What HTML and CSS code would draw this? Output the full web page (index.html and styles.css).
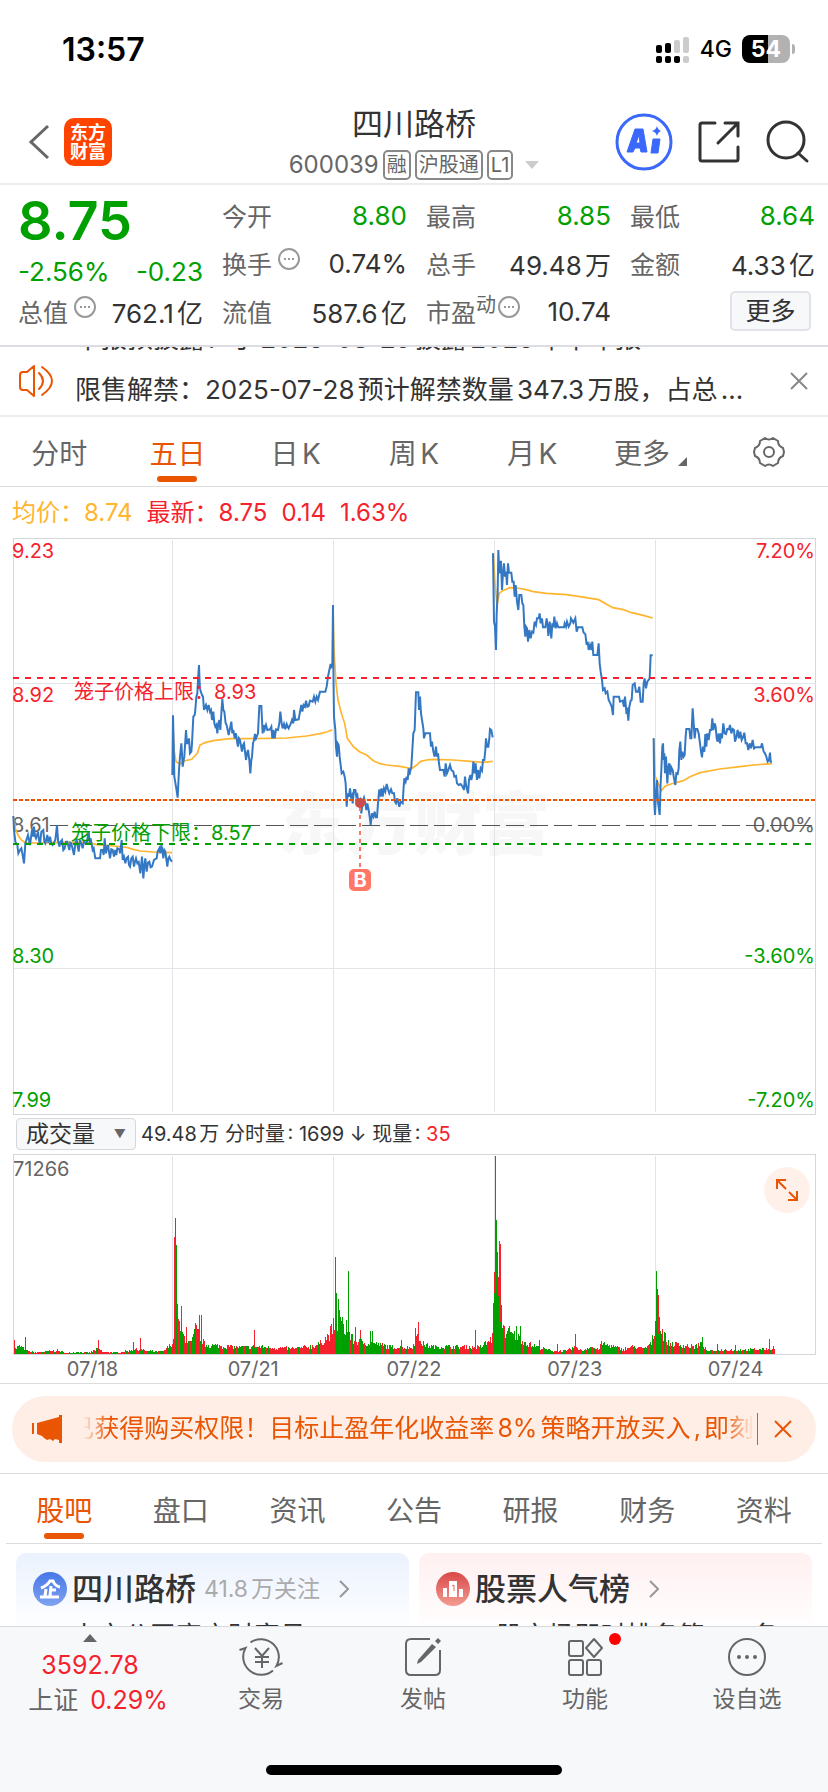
FILE: index.html
```
<!DOCTYPE html>
<html lang="zh-CN">
<head>
    <meta charset="UTF-8">
    <meta name="viewport" content="width=device-width, initial-scale=1.0">
    <title>四川路桥 600039</title>
    <link rel="stylesheet" href="styles.css">
</head>
<body>
    <div class="status-bar">
        <span class="clock">13:57</span>
        <div class="status-icons">
            <svg width="34" height="28" viewBox="0 0 34 28">
                <g fill="#000">
                    <rect x="0" y="10" width="6" height="8" rx="2"/>
                    <rect x="9" y="8" width="6" height="10" rx="2"/>
                    <rect x="0" y="21" width="6" height="7" rx="2"/>
                    <rect x="9" y="21" width="6" height="7" rx="2"/>
                    <rect x="18" y="21" width="6" height="7" rx="2"/>
                </g>
                <g fill="#ccc">
                    <rect x="18" y="5" width="6" height="13" rx="2"/>
                    <rect x="27" y="2" width="6" height="16" rx="2"/>
                    <rect x="27" y="21" width="6" height="7" rx="2"/>
                </g>
            </svg>
            <span class="network">4G</span>
            <div class="battery">54</div>
        </div>
    </div>

    <header class="header">
        <div class="header-left">
            <button class="icon-btn" aria-label="返回">
                <svg width="22" height="36" viewBox="0 0 22 36" fill="none" stroke="#666" stroke-width="3"><path d="M20 2L3 18l17 16"/></svg>
            </button>
            <a href="#" class="logo"><span>东方</span><span>财富</span></a>
        </div>
        <div class="title">
            <h1>四川路桥</h1>
            <div class="code-row">
                <span>600039</span>
                <span class="tag">融</span><span class="tag">沪股通</span><span class="tag">L1</span>
                <svg class="code-arrow" width="14" height="8" viewBox="0 0 14 8"><path d="M0 0h14L7 8z" fill="#ccc"/></svg>
            </div>
        </div>
        <div class="header-right">
            <button class="icon-btn" aria-label="Ai">
                <svg width="60" height="60" viewBox="0 0 60 60">
                    <circle cx="30" cy="30" r="27" fill="none" stroke="#3a68fb" stroke-width="3"/>
                    <path d="M21 17h8l4 23h-6l-1-4h-5l-2 4h-6zM25 23l-3 8h4zM39 27h7l-2 14h-7z" fill="#3a68fb" fill-rule="evenodd" stroke="#3a68fb" stroke-linejoin="round"/>
                    <path d="M43 14q1 4 4 5q-3 1-4 5q-1-4-5-5q4-1 5-5z" fill="#3a68fb"/>
                </svg>
            </button>
            <button class="icon-btn" aria-label="分享">
                <svg width="44" height="44" viewBox="0 0 44 44" fill="none" stroke="#333" stroke-width="3" stroke-linecap="round"><path d="M17 3H4q-2 0-2 2v34q0 2 2 2h34q2 0 2-2V27M27 3h13v13M39 4L20 23"/></svg>
            </button>
            <button class="icon-btn" aria-label="搜索">
                <svg width="44" height="44" viewBox="0 0 44 44" fill="none" stroke="#333" stroke-width="3"><circle cx="20" cy="20" r="18"/><path d="M32 33l9 8" stroke-linecap="round"/></svg>
            </button>
        </div>
    </header>

    <section class="quote">
        <div class="quote-col">
            <div class="price green">8.75</div>
            <div class="cell change green"><span>-2.56%</span><span>-0.23</span></div>
            <div class="cell"><span class="label">总值<i class="more-dot"></i></span><span>762.1亿</span></div>
        </div>
        <div class="quote-col">
            <div class="cell"><span class="label">今开</span><span class="green">8.80</span></div>
            <div class="cell"><span class="label">换手<i class="more-dot"></i></span><span>0.74%</span></div>
            <div class="cell"><span class="label">流值</span><span>587.6亿</span></div>
        </div>
        <div class="quote-col">
            <div class="cell"><span class="label">最高</span><span class="green">8.85</span></div>
            <div class="cell"><span class="label">总手</span><span>49.48万</span></div>
            <div class="cell"><span class="label">市盈<sup>动</sup><i class="more-dot tight"></i></span><span>10.74</span></div>
        </div>
        <div class="quote-col">
            <div class="cell"><span class="label">最低</span><span class="green">8.64</span></div>
            <div class="cell"><span class="label">金额</span><span>4.33亿</span></div>
            <div class="cell end"><button class="more-btn">更多</button></div>
        </div>
    </section>

    <section class="notice">
        <svg width="36" height="34" viewBox="0 0 36 34" fill="none" stroke="#ea5504" stroke-width="2" stroke-linejoin="round" stroke-linecap="round"><path d="M15 2v30l-7-6H4q-3 0-3-3V11q0-3 3-3h4zM20 9q8 8 0 16M23 3q20 14 0 28"/></svg>
        <div class="notice-text">
            <p>半报预披露：于2025-08-29披露2025年半年报</p>
            <p>限售解禁：2025-07-28预计解禁数量347.3万股，占总...</p>
        </div>
        <button class="icon-btn" aria-label="关闭">
            <svg width="18" height="18" viewBox="0 0 18 18" stroke="#888" stroke-width="2"><path d="M1 1l16 16M17 1L1 17"/></svg>
        </button>
    </section>

    <nav class="period-tabs">
        <a href="#">分时</a>
        <a href="#" class="active">五日</a>
        <a href="#">日K</a>
        <a href="#">周K</a>
        <a href="#">月K</a>
        <a href="#">更多<svg class="corner" width="9" height="9" viewBox="0 0 9 9"><path d="M9 0v9H0z" fill="#666"/></svg></a>
        <a href="#" aria-label="设置">
            <svg width="34" height="34" viewBox="0 0 34 34" fill="none" stroke="#666" stroke-width="2" stroke-linejoin="round"><path d="M13 3q4 3 8 0l5 3q0 5 5 7l1 4-1 4q-5 2-5 7l-5 3q-4-3-8 0l-5-3q0-5-5-7l-1-4 1-4q5-2 5-7z"/><circle cx="17" cy="17" r="5"/></svg>
        </a>
    </nav>

    <main class="content">
        <div class="legend">
            <span class="avg">均价：8.74</span><span>最新：8.75</span><span>0.14</span><span>1.63%</span>
        </div>

        <svg class="price-chart" viewBox="0 0 804 578">
            <text class="watermark" x="266" y="312">东方财富</text>
            <g class="grid">
                <path d="M160 3v572M321 3v572M482 3v572M643 3v572M1 146h802M1 431h802"/>
            </g>
            <rect class="frame" x="1" y="1" width="802" height="576"/>
            <g class="axis-left">
                <text x="0" y="21" class="up">9.23</text>
                <text x="0" y="165" class="up">8.92</text>
                <text x="0" y="295">8.61</text>
                <text x="0" y="426" class="down">8.30</text>
                <text x="0" y="570" class="down">7.99</text>
            </g>
            <g class="axis-right">
                <text x="803" y="21" class="up">7.20%</text>
                <text x="803" y="165" class="up">3.60%</text>
                <text x="803" y="295">0.00%</text>
                <text x="803" y="426" class="down">-3.60%</text>
                <text x="803" y="570" class="down">-7.20%</text>
            </g>
            <path class="level" d="M38 288h766" stroke="#555" stroke-width="1" stroke-dasharray="18 6"/>
            <!-- series points are stored at three times the chart scale -->
            <g class="series" transform="translate(-12 -7) scale(0.33333)">
                <g class="avg-line">
                    <polyline points="40,860 46,895 54,915 64,930 76,938 110,939 180,937 265,938 290,944 340,948 380,952 400,958 420,963 460,966 516,968"/>
                    <polyline points="518,560 522,660 528,695 540,702 555,692 575,688 592,670 600,645 615,638 640,632 690,626 740,626 860,624 920,618 960,611 980,606 997,599"/>
                    <polyline points="999,225 1002,360 1008,460 1014,510 1024,550 1034,580 1042,625 1060,650 1080,666 1100,675 1120,692 1140,701 1160,705 1200,709 1235,716 1250,705 1262,694 1280,690 1300,688 1360,690 1410,694 1450,697 1478,694"/>
                    <polyline points="1480,70 1485,160 1491,225 1498,190 1508,182 1530,173 1550,174 1575,178 1600,185 1640,190 1700,194 1740,200 1796,209 1838,233 1870,239 1895,248 1930,256 1958,264"/>
                    <polyline points="1961,625 1966,740 1984,782 1996,768 2020,760 2050,752 2070,740 2100,728 2160,717 2220,710 2260,705 2316,701"/>
                </g>
                <g class="price-line">
                    <polyline points="40,858 42,900 46,935 52,945 55,970 60,960 64,955 68,975 72,1000 76,940 84,915 90,945 96,900 99,920 102,890 105,918 108,925 114,905 117,930 120,945 124,905 130,900 133,935 136,940 142,915 145,938 150,920 154,940 158,945 166,930 171,885 174,930 178,950 182,935 186,930 190,960 194,955 198,935 202,935 208,960 211,938 214,940 222,975 226,940 230,930 236,965 240,930 244,940 248,955 252,935 260,940 266,905 269,938 272,925 278,960 281,955 286,985 300,985 303,960 308,960 311,975 314,925 318,970 321,955 324,945 330,985 334,958 338,960 342,980 346,960 349,975 352,955 358,958 360,970 365,930 368,990 372,980 376,1000 380,984 384,980 387,1005 390,1010 394,985 398,980 402,1010 405,995 408,985 412,1000 416,996 421,1030 426,980 430,1045 434,998 436,985 440,1025 444,998 448,995 452,1012 456,1010 462,990 470,985 473,965 478,955 481,970 484,945 487,960 490,985 493,960 496,965 502,1010 505,985 508,980 512,990 516,995"/>
                    <polyline points="517,735 519,556 521,640 523,740 528,770 533,803 537,720 540,680 544,640 546,670 548,710 551,690 553,680 558,600 561,640 564,640 567,625 570,670 574,665 576,640 580,560 584,555 586,540 589,500 592,490 594,450 597,405 599,460 601,480 606,495 609,500 612,540 618,525 622,540 626,525 630,545 633,540 636,570 640,545 643,580 646,590 649,585 652,610 655,580 658,570 661,600 664,550 667,507 670,540 673,545 677,580 680,585 686,615 690,595 694,575 697,610 700,600 704,625 708,610 712,640 714,650 717,625 720,630 726,665 729,645 732,640 735,665 738,690 741,670 744,660 748,690 751,730 754,690 756,680 759,640 762,630 765,612 768,625 774,610 778,528 784,528 788,610 791,585 794,598 798,585 802,600 810,598 814,590 817,625 820,600 824,625 828,598 834,600 838,580 841,545 845,580 848,595 852,582 856,598 860,582 866,595 872,582 876,570 880,580 882,540 886,570 896,568 900,545 904,525 907,545 911,525 915,530 918,512 922,530 926,528 930,512 938,515 942,500 946,515 950,500 954,510 960,485 976,485 980,470 984,440 988,420 992,402 994,415 997,405 999,225"/>
                    <polyline points="999,225 1000,400 1002,560 1006,600 1008,650 1011,680 1013,640 1016,645 1019,680 1022,705 1025,730 1030,725 1034,740 1037,760 1040,830 1043,790 1047,800 1050,775 1053,800 1056,795 1058,820 1062,780 1066,780 1069,800 1072,795 1075,820 1080,810 1084,850 1088,815 1092,803 1096,820 1099,840 1102,820 1106,840 1109,860 1112,885 1116,850 1120,860 1124,845 1127,862 1131,862 1134,820 1138,778 1141,800 1145,775 1148,800 1152,775 1156,785 1160,762 1164,778 1168,790 1173,778 1177,790 1182,790 1185,815 1188,820 1192,805 1198,830 1202,815 1208,820 1211,770 1213,745 1217,755 1220,740 1223,750 1226,715 1228,735 1234,710 1237,660 1240,610 1244,600 1246,540 1248,487 1255,487 1257,540 1260,500 1263,550 1266,570 1270,595 1272,625 1276,610 1290,610 1293,650 1296,635 1300,665 1304,680 1308,650 1311,680 1314,670 1317,700 1320,720 1330,720 1334,740 1337,700 1341,730 1345,720 1350,705 1354,720 1360,725 1363,740 1368,738 1371,760 1376,765 1382,762 1388,770 1392,780 1395,740 1398,765 1404,790 1407,750 1411,735 1414,750 1417,735 1420,695 1424,730 1427,700 1431,750 1434,720 1438,745 1442,715 1446,722 1449,690 1453,690 1456,660 1458,625 1461,650 1465,650 1468,625 1470,597 1474,600 1478,622"/>
                    <polyline points="1479,70 1482,275 1485,290 1488,360 1490,250 1493,190 1495,60 1498,130 1500,95 1503,95 1506,180 1509,130 1512,100 1515,140 1518,125 1521,165 1524,100 1527,128 1534,128 1537,155 1541,155 1544,200 1547,165 1551,215 1555,240 1558,195 1564,195 1567,220 1570,225 1573,290 1576,320 1578,290 1581,295 1584,335 1588,300 1592,325 1596,305 1600,308 1604,275 1608,285 1611,265 1616,265 1619,250 1622,280 1626,265 1629,292 1636,292 1640,265 1643,290 1645,318 1649,275 1654,325 1657,280 1660,292 1663,260 1667,295 1671,280 1675,292 1692,292 1694,280 1698,290 1701,275 1706,290 1711,280 1713,265 1720,278 1726,265 1730,305 1734,292 1747,292 1751,308 1756,312 1760,345 1763,335 1766,360 1770,345 1774,360 1777,335 1780,375 1792,375 1796,340 1799,400 1802,425 1806,450 1809,480 1814,475 1817,490 1822,485 1826,510 1831,520 1835,530 1839,555 1841,500 1857,500 1860,515 1868,512 1872,530 1875,500 1879,545 1882,540 1885,572 1888,530 1892,512 1895,510 1898,465 1904,460 1908,485 1914,485 1918,470 1922,515 1928,515 1931,460 1934,445 1938,475 1942,455 1949,445 1952,376 1958,376"/>
                    <polyline points="1961,625 1962,720 1963,820 1965,855 1968,790 1971,750 1974,815 1979,855 1982,760 1984,720 1987,650 1989,640 1991,690 1993,670 1995,730 1998,680 2002,760 2005,710 2008,700 2011,735 2014,712 2018,720 2022,745 2026,765 2029,730 2033,732 2036,715 2038,660 2041,635 2044,690 2047,665 2051,680 2054,675 2057,620 2059,597 2068,597 2071,625 2074,625 2078,535 2081,580 2084,625 2087,597 2092,597 2096,610 2100,640 2103,665 2106,682 2109,650 2113,665 2116,612 2119,650 2122,610 2126,630 2130,600 2134,600 2137,565 2140,600 2144,580 2147,590 2150,625 2153,635 2156,610 2160,640 2163,610 2166,625 2170,580 2174,610 2178,612 2182,597 2187,598 2190,585 2194,610 2198,597 2202,600 2205,635 2209,622 2213,600 2217,625 2221,605 2225,630 2229,622 2233,608 2237,640 2241,640 2245,660 2249,640 2253,655 2258,630 2262,655 2266,652 2283,652 2286,640 2291,665 2295,670 2299,680 2303,695 2307,690 2310,668 2312,695 2316,695"/>
                </g>
            </g>
            <g class="level" stroke-width="2">
                <path d="M1 141h802" stroke="#f5222d" stroke-dasharray="6 6"/>
                <path d="M1 263h802" stroke="#ea5504" stroke-dasharray="4 2"/>
                <path d="M1 307h802" stroke="#00a000" stroke-dasharray="6 6"/>
                <path d="M348 270v62" stroke="#ff7866" stroke-dasharray="4 4"/>
            </g>
            <text class="cage up" x="62" y="162">笼子价格上限：8.93</text>
            <text class="cage down" x="59" y="303">笼子价格下限：8.57</text>
            <circle cx="348" cy="266" r="5" fill="#cc4c4c"/>
            <rect x="337" y="332" width="22" height="22" rx="5" fill="#ff7866"/>
            <text class="buy" x="348" y="350">B</text>
        </svg>

        <div class="volume-bar">
            <button class="volume-btn">成交量<span>▼</span></button>
            <p>49.48万 分时量: 1699 ↓ 现量: <span class="up">35</span></p>
        </div>

        <div class="volume-wrap">
            <svg class="volume-chart" viewBox="0 0 804 202">
                <path class="grid" d="M160 3v198M321 3v198M482 3v198M643 3v198"/>
                <text x="1" y="23">71266</text>
                <g class="bars" transform="translate(-12 -13) scale(0.33333)">
                    <path id="vol-up" stroke="#f5222d"/>
                    <path id="vol-down" stroke="#00a000"/>
                </g>
                <rect class="frame" x="1" y="1" width="802" height="200"/>
            </svg>
            <button class="expand-btn" aria-label="全屏">
                <svg width="24" height="24" viewBox="0 0 24 24" fill="none" stroke="#ea5504" stroke-width="2"><path d="M11 2H2v9M2 2l9 9M22 13v9h-9M22 22l-8-8"/></svg>
            </button>
        </div>
        <div class="dates"><span>07/18</span><span>07/21</span><span>07/22</span><span>07/23</span><span>07/24</span></div>

        <section class="banner-wrap">
            <div class="banner">
                <svg width="30" height="28" viewBox="0 0 30 28" fill="#ea5504"><path d="M0 8h2v11H0zM5 8L27 2V0h3v28h-3v-3l-4-1-2 2-3-2-3 1-3-2-2-2-5-2z"/></svg>
                <div class="banner-text"><span>已获得购买权限！目标止盈年化收益率8%策略开放买入,即刻</span></div>
                <button class="icon-btn" aria-label="关闭">
                    <svg width="18" height="18" viewBox="0 0 18 18" stroke="#ea5504" stroke-width="2"><path d="M1 1l16 16M17 1L1 17"/></svg>
                </button>
            </div>
        </section>

        <nav class="info-tabs">
            <a href="#" class="active">股吧</a>
            <a href="#">盘口</a>
            <a href="#">资讯</a>
            <a href="#">公告</a>
            <a href="#">研报</a>
            <a href="#">财务</a>
            <a href="#">资料</a>
        </nav>

        <section class="cards">
            <a href="#" class="card blue">
                <div class="card-title">
                    <svg width="36" height="36" viewBox="0 0 36 36">
                        <defs><linearGradient id="bg1" x2="0" y2="1"><stop stop-color="#4777e8"/><stop offset="1" stop-color="#7fa3ef"/></linearGradient></defs>
                        <circle cx="18" cy="18" r="17" fill="url(#bg1)"/>
                        <path d="M9 17q6-2 9-7h3q2 5 7 6M19 15l-1 10M19 19h5M14 18l-1 7M8 26h19" fill="none" stroke="#fff" stroke-width="3"/>
                    </svg>
                    <b>四川路桥</b><span>41.8万关注</span>
                    <svg width="10" height="18" viewBox="0 0 10 18" fill="none" stroke="#999" stroke-width="2"><path d="M1 1l8 8-8 8"/></svg>
                </div>
                <p>上市公司官方财富号</p>
            </a>
            <a href="#" class="card pink">
                <div class="card-title">
                    <svg width="36" height="36" viewBox="0 0 36 36">
                        <defs><linearGradient id="bg2" x2="0" y2="1"><stop stop-color="#d94848"/><stop offset="1" stop-color="#f29c93"/></linearGradient></defs>
                        <circle cx="18" cy="18" r="17" fill="url(#bg2)"/>
                        <path d="M8 17h4v9H8zM14 10h8v16h-8zM24 18h4v8h-4z" fill="#fff"/>
                        <path d="M17 15l2-1v6" fill="none" stroke="#e06a64" stroke-width="1"/>
                    </svg>
                    <b>股票人气榜</b>
                    <svg width="10" height="18" viewBox="0 0 10 18" fill="none" stroke="#999" stroke-width="2"><path d="M1 1l8 8-8 8"/></svg>
                </div>
                <p>A股市场即时排名第<em>157</em>名</p>
            </a>
        </section>
    </main>

    <footer class="bottom">
        <nav class="bottom-nav">
            <a href="#" class="index">
                <svg width="14" height="8" viewBox="0 0 14 8"><path d="M7 0l7 8H0z" fill="#666"/></svg>
                <span class="up">3592.78</span>
                <span class="index-row">上证<span class="up">0.29%</span></span>
            </a>
            <a href="#">
                <svg width="44" height="40" viewBox="0 0 44 40" fill="none" stroke="#666" stroke-width="2">
                    <path d="M11.5 5.4A18 18 0 0 1 37.5 29l6-3M34 33.4A18 18 0 0 1 6.5 11l-6 2M16 11l7 8 7-8M23 19v12M16 20h14M16 25h14"/>
                </svg>
                <span>交易</span>
            </a>
            <a href="#">
                <svg width="38" height="40" viewBox="0 0 38 40" fill="none" stroke="#666" stroke-width="2">
                    <path d="M26 2H7Q2 2 2 7v26q0 5 5 5h24q5 0 5-5V13"/>
                    <path d="M28 7l4 3-15 15-4 2 1-4zM31 4l3-3 3 3-3 3z" fill="#666" stroke="none"/>
                </svg>
                <span>发帖</span>
            </a>
            <a href="#">
                <span class="badge-wrap">
                    <svg width="36" height="40" viewBox="0 0 36 40" fill="none" stroke="#666" stroke-width="2" stroke-linejoin="round">
                        <rect x="2" y="4" width="14" height="15" rx="2"/>
                        <rect x="2" y="23" width="14" height="15" rx="2"/>
                        <rect x="20" y="23" width="14" height="15" rx="2"/>
                        <path d="M27 2l8 9-8 9-8-9z"/>
                    </svg>
                    <i class="badge"></i>
                </span>
                <span>功能</span>
            </a>
            <a href="#">
                <svg width="40" height="40" viewBox="0 0 40 40"><circle cx="20" cy="20" r="18" fill="none" stroke="#666" stroke-width="2"/><g fill="#666"><circle cx="12" cy="20" r="2"/><circle cx="20" cy="20" r="2"/><circle cx="28" cy="20" r="2"/></g></svg>
                <span>设自选</span>
            </a>
        </nav>
        <div class="home-bar"></div>
    </footer>

    <script src="script.js"></script>
</body>
</html>
```
FILE: styles.css
```
* {
    box-sizing: border-box;
}

body {
    margin: 0;
    height: 100vh;
    display: flex;
    flex-direction: column;
    overflow: hidden;
    background: white;
    color: #333;
    font-family: Inter, "Noto Sans CJK SC", sans-serif;
    font-size: 26px;
    text-autospace: normal;
}

a {
    color: inherit;
    text-decoration: none;
}

p, h1 {
    margin: 0;
    font-weight: 400;
}

button {
    font-family: inherit;
    color: inherit;
}

svg {
    display: block;
    flex: none;
}

.icon-btn {
    border: none;
    background: none;
    padding: 0;
}

.green, .down {
    color: #00a000;
    fill: #00a000;
}

.up {
    color: #f5222d;
    fill: #f5222d;
}

/* status bar */
.status-bar {
    display: flex;
    justify-content: space-between;
    align-items: center;
    height: 98px;
    padding: 0 34px 0 62px;
    color: black;
}

.clock {
    font-size: 32px;
    font-weight: 600;
}

.status-icons {
    display: flex;
    align-items: center;
    gap: 10px;
}

.network {
    font-size: 23px;
    font-weight: 500;
}

.battery {
    position: relative;
    width: 48px;
    height: 28px;
    margin-right: 4px;
    border-radius: 8px;
    background: linear-gradient(90deg, black 54%, #b2b2b2 54%);
    color: white;
    font-size: 23px;
    font-weight: 700;
    line-height: 28px;
    text-align: center;
}

.battery::after {
    content: "";
    position: absolute;
    left: 50px;
    top: 9px;
    width: 3px;
    height: 10px;
    border-radius: 0 3px 3px 0;
    background: #b2b2b2;
}

/* header */
.header {
    display: grid;
    grid-template-columns: minmax(0, 1fr) auto minmax(0, 1fr);
    align-items: center;
    height: 87px;
    padding: 0 18px;
    border-bottom: 2px solid #ececec;
}

.header-left, .header-right {
    display: flex;
    align-items: center;
    gap: 14px;
}

.header-left {
    padding-left: 10px;
}

.header-right {
    justify-content: flex-end;
    gap: 24px;
}

.logo {
    display: flex;
    flex-direction: column;
    justify-content: center;
    align-items: center;
    width: 48px;
    height: 48px;
    border-radius: 10px;
    background: #ff4400;
    color: white;
    font-size: 18px;
    font-weight: 700;
    line-height: 19px;
}

.title {
    padding-top: 5px;
    text-align: center;
}

.title h1 {
    font-size: 31px;
    line-height: 42px;
}

.code-row {
    display: flex;
    align-items: center;
    gap: 4px;
    font-size: 24px;
    line-height: 40px;
    color: #666;
}

.tag {
    border: 2px solid #888;
    border-radius: 5px;
    padding: 0 2px;
    font-size: 20px;
    line-height: 26px;
}

.code-arrow {
    margin-left: 8px;
}

/* quote */
.quote {
    display: grid;
    grid-template-columns: repeat(4, 1fr);
    gap: 19px;
    padding: 6px 13px 10px 18px;
    border-bottom: 2px solid #dcdde2;
}

.quote-col {
    display: flex;
    flex-direction: column;
}

.cell {
    display: flex;
    justify-content: space-between;
    align-items: center;
    height: 48px;
    white-space: nowrap;
}

.price {
    height: 60px;
    font-size: 54px;
    font-weight: 600;
    line-height: 60px;
}

.change {
    height: 36px;
    padding-top: 4px;
}

.label {
    display: flex;
    align-items: center;
    font-size: 25px;
    color: #666;
}

.label sup {
    font-size: 20px;
    line-height: 20px;
    margin-bottom: 12px;
    vertical-align: baseline;
}

.more-dot {
    display: flex;
    align-items: center;
    justify-content: center;
    width: 22px;
    height: 22px;
    margin: 0 0 8px 6px;
    border: 2px solid #999;
    border-radius: 50%;
}

.more-dot::before {
    content: "";
    width: 2px;
    height: 2px;
    background: #999;
    box-shadow: -4px 0 #999, 4px 0 #999;
}

.more-dot.tight {
    margin-left: 2px;
}

.end {
    justify-content: flex-end;
}

.more-btn {
    width: 81px;
    height: 40px;
    margin: 0 4px 0 0;
    padding: 0;
    border: 2px solid #e2e3e8;
    border-radius: 5px;
    background: #f7f8fa;
    font-size: 25px;
    line-height: 34px;
}

/* notice */
.notice {
    display: flex;
    align-items: center;
    gap: 20px;
    height: 70px;
    padding: 0 20px 0 19px;
    border-bottom: 2px solid #ececec;
}

.notice-text {
    flex: 1;
    height: 68px;
    overflow: hidden;
    display: flex;
    flex-direction: column;
    justify-content: flex-end;
    line-height: 51px;
    white-space: nowrap;
}

/* tabs */
.period-tabs, .info-tabs {
    display: grid;
    grid-template-columns: repeat(7, 1fr);
    font-size: 28px;
    color: #666;
}

.period-tabs {
    height: 70px;
    border-bottom: 1px solid #dcdcdc;
}

.period-tabs a, .info-tabs a {
    position: relative;
    display: flex;
    align-items: center;
    justify-content: center;
}

.period-tabs .active, .info-tabs .active {
    color: #ea5504;
}

.active::after {
    content: "";
    position: absolute;
    bottom: 4px;
    left: calc(50% - 20px);
    width: 40px;
    height: 6px;
    border-radius: 3px;
    background: #ea5504;
}

.corner {
    margin: 20px 0 0 8px;
}

/* chart */
.content {
    flex: 1;
    min-height: 0;
    overflow: hidden;
}

.legend {
    display: flex;
    gap: 14px;
    padding: 0 12px;
    height: 50px;
    font-size: 24px;
    line-height: 52px;
    color: #f5222d;
}

.avg {
    color: #ffb52e;
}

.price-chart, .volume-wrap, .dates {
    width: calc(100% - 24px);
    margin: 0 12px;
}

.price-chart text, .volume-chart text {
    font-size: 20px;
}

.axis-left text, .axis-right text, .volume-chart text {
    fill: #666;
}

.axis-left .up, .axis-right .up {
    fill: #f5222d;
}

.axis-left .down, .axis-right .down {
    fill: #00a000;
}

.axis-right {
    text-anchor: end;
}

.frame, .grid, .level, .bars {
    shape-rendering: crispEdges;
}

.frame {
    fill: none;
    stroke: #d5d6da;
}

.grid {
    fill: none;
    stroke: #e3e4ea;
}

.price-chart .watermark {
    font-size: 68px;
    font-weight: 900;
    fill: #f7f7f7;
}

.price-chart .buy {
    font-weight: 700;
    fill: white;
    text-anchor: middle;
}

.series polyline {
    fill: none;
    stroke-width: 6;
}

.series .avg-line polyline {
    stroke: #ffb52e;
    stroke-width: 5;
}

.price-line {
    stroke: #3478c4;
}

.bars path {
    stroke-width: 3;
}

.volume-bar {
    display: flex;
    align-items: center;
    gap: 5px;
    height: 38px;
    padding-left: 16px;
    font-size: 20px;
    line-height: 34px;
}

.volume-btn {
    display: flex;
    align-items: center;
    justify-content: space-between;
    width: 120px;
    height: 32px;
    padding: 0 9px;
    border: 1px solid #d5d6da;
    border-radius: 4px;
    background: #f7f8fa;
    font-size: 23px;
    line-height: 30px;
}

.volume-btn span {
    font-size: 12px;
    color: #666;
}

.volume-wrap {
    position: relative;
}

.expand-btn {
    position: absolute;
    top: 14px;
    right: 6px;
    display: flex;
    align-items: center;
    justify-content: center;
    width: 46px;
    height: 46px;
    padding: 0;
    border: none;
    border-radius: 50%;
    background: #fff1ea;
}

.dates {
    display: grid;
    grid-template-columns: repeat(5, 1fr);
    height: 28px;
    font-size: 20px;
    line-height: 28px;
    text-align: center;
    color: #666;
}

/* banner */
.banner-wrap {
    padding: 12px 12px 11px;
    border-top: 1px solid #dcdcdc;
    border-bottom: 1px solid #dcdcdc;
}

.banner {
    display: flex;
    align-items: center;
    height: 66px;
    padding: 0 24px 0 20px;
    border-radius: 33px;
    background: #feeee5;
    color: #ea5504;
    font-size: 25px;
}

.banner-text {
    flex: 1;
    display: flex;
    justify-content: flex-end;
    height: 32px;
    margin: 0 16px 0 18px;
    padding-right: 3px;
    border-right: 1px solid #ea5504;
    overflow: hidden;
    line-height: 30px;
    white-space: nowrap;
}

.banner-text span {
    -webkit-mask-image: linear-gradient(90deg, transparent 14px, black 40px, black calc(100% - 30px), transparent);
    mask-image: linear-gradient(90deg, transparent 14px, black 40px, black calc(100% - 30px), transparent);
}

.info-tabs {
    height: 70px;
    margin: 0 6px;
    border-bottom: 1px solid #dcdcdc;
}

/* cards */
.cards {
    display: grid;
    grid-template-columns: 1fr 1fr;
    gap: 10px;
    padding: 9px 16px;
}

.card {
    height: 160px;
    padding: 16px;
    border-radius: 10px;
}

.blue {
    background: linear-gradient(#ebf2fe, white 80px);
}

.pink {
    background: linear-gradient(#fff0f1, white 80px);
}

.card-title {
    display: flex;
    align-items: center;
    gap: 4px;
    height: 40px;
    line-height: 36px;
}

.card-title b {
    font-size: 31px;
    font-weight: 500;
}

.card-title span {
    margin-left: 4px;
    font-size: 23px;
    color: #aaa;
}

.card-title svg:last-child {
    margin-left: 15px;
}

.card p {
    padding-left: 40px;
    line-height: 54px;
}

.card em {
    font-style: normal;
    color: #f9c9ae;
}

/* bottom nav */
.bottom {
    border-top: 1px solid #d8d9dd;
    background: #f7f8fa;
}

.bottom-nav {
    display: grid;
    grid-template-columns: 180fr 162fr 162fr 162fr 162fr;
    height: 138px;
    font-size: 23px;
    line-height: 32px;
    color: #666;
}

.bottom-nav a {
    display: flex;
    flex-direction: column;
    align-items: center;
    gap: 6px;
    padding-top: 10px;
}

.bottom-nav .index {
    gap: 3px;
    padding-top: 7px;
    font-size: 25px;
}

.index svg {
    margin-bottom: 4px;
}

.index-row {
    display: flex;
    gap: 12px;
    padding-left: 16px;
}

.badge-wrap {
    position: relative;
}

.badge {
    position: absolute;
    top: -4px;
    right: -18px;
    width: 12px;
    height: 12px;
    border-radius: 50%;
    background: red;
}

.home-bar {
    width: 296px;
    height: 10px;
    margin: 0 auto 17px;
    border-radius: 5px;
    background: black;
}
```
FILE: script.js
```
// one entry per stretch of minutes: [x, typical height, chance that the bar is red]
const levels = [
    [38, 14, 0.4], [60, 26, 0.2], [80, 10, 0.5], [110, 5, 0.4], [170, 12, 0.4], [200, 4, 0.5],
    [240, 7, 0.6], [270, 5, 0.5], [292, 18, 0.6], [310, 6, 0.6], [360, 6, 0.6], [410, 16, 0.6],
    [440, 10, 0.5], [490, 8, 0.6], [518, 38, 0.6], [536, 100, 0.3], [550, 60, 0.6], [572, 32, 0.4],
    [588, 80, 0.8], [604, 50, 0.5], [615, 30, 0.2], [660, 26, 0.5], [720, 22, 0.4], [790, 24, 0.5],
    [830, 20, 0.8], [880, 18, 0.9], [930, 24, 0.7], [960, 34, 0.9], [985, 60, 0.9], [1000, 90, 0.6],
    [1018, 110, 0.2], [1045, 70, 0.3], [1060, 44, 0.3], [1100, 38, 0.3], [1140, 30, 0.6], [1180, 22, 0.7],
    [1235, 20, 0.8], [1252, 60, 0.6], [1270, 32, 0.2], [1300, 24, 0.3], [1360, 24, 0.6], [1440, 22, 0.5],
    [1475, 50, 0.7], [1484, 200, 0.4], [1505, 130, 0.5], [1515, 72, 0.6], [1550, 58, 0.3], [1580, 36, 0.3],
    [1620, 20, 0.5], [1660, 10, 0.8], [1700, 10, 0.8], [1728, 26, 0.7], [1745, 10, 0.6], [1770, 26, 0.5],
    [1795, 14, 0.5], [1805, 36, 0.2], [1845, 22, 0.3], [1870, 16, 0.8], [1905, 26, 0.8], [1930, 16, 0.8],
    [1955, 36, 0.8], [1968, 110, 0.4], [1988, 70, 0.4], [2005, 36, 0.4], [2040, 30, 0.7], [2080, 24, 0.8],
    [2108, 34, 0.3], [2120, 10, 0.6], [2180, 14, 0.5], [2240, 14, 0.6], [2290, 16, 0.7], [2322, 22, 0.5]
];

// single tall bars: [x, height, red]
const spikes = [
    [43, 41, 1], [77, 51, 0], [294, 41, 1], [401, 37, 0], [422, 48, 1],
    [523, 352, 1], [526, 408, 0], [529, 328, 0], [532, 150, 1], [544, 144, 1], [560, 80, 1],
    [585, 94, 1], [599, 117, 1], [603, 117, 1], [764, 72, 1],
    [1005, 291, 0], [1008, 183, 0], [1015, 164, 0], [1018, 132, 1], [1038, 101, 0], [1045, 249, 0],
    [1065, 81, 0], [1081, 72, 1], [1111, 68, 0], [1117, 70, 0], [1205, 43, 1], [1245, 78, 1], [1254, 97, 1],
    [1425, 71, 1], [1484, 246, 1], [1487, 594, 0], [1490, 402, 0], [1493, 306, 0], [1496, 230, 1],
    [1499, 339, 1], [1502, 330, 1], [1505, 145, 1], [1529, 85, 1], [1549, 84, 0], [1560, 84, 0],
    [1617, 43, 1], [1672, 30, 1], [1726, 59, 1], [1968, 249, 0], [1971, 195, 0], [1974, 176, 1],
    [1977, 110, 0], [2108, 51, 0], [2153, 31, 0], [2207, 28, 1], [2307, 45, 1]
];

const base = 642;
const paths = { up: "", down: "" };
let seed = 7;

const random = () => {
    seed = (seed * 16807) % 2147483647;
    return seed / 2147483647;
};

// bars snap to a grid of three units, one pixel each
const addBar = (x, height, red) => {
    paths[red ? "up" : "down"] += `M${Math.floor(x / 3) * 3 + 1} ${base}V${Math.round(base - height)}`;
};

let i = 0;
for (let x = 40; x <= 2324; x += 3) {
    while (i < levels.length - 2 && levels[i + 1][0] < x) i++;
    const [x0, h0, red] = levels[i];
    const [x1, h1] = levels[i + 1];
    const t = Math.min(1, Math.max(0, (x - x0) / (x1 - x0)));
    addBar(x, (h0 + (h1 - h0) * t) * (0.6 + random() * 0.6), random() < red);
}
spikes.forEach(([x, height, red]) => addBar(x, height, red));

document.getElementById("vol-up").setAttribute("d", paths.up);
document.getElementById("vol-down").setAttribute("d", paths.down);
```
